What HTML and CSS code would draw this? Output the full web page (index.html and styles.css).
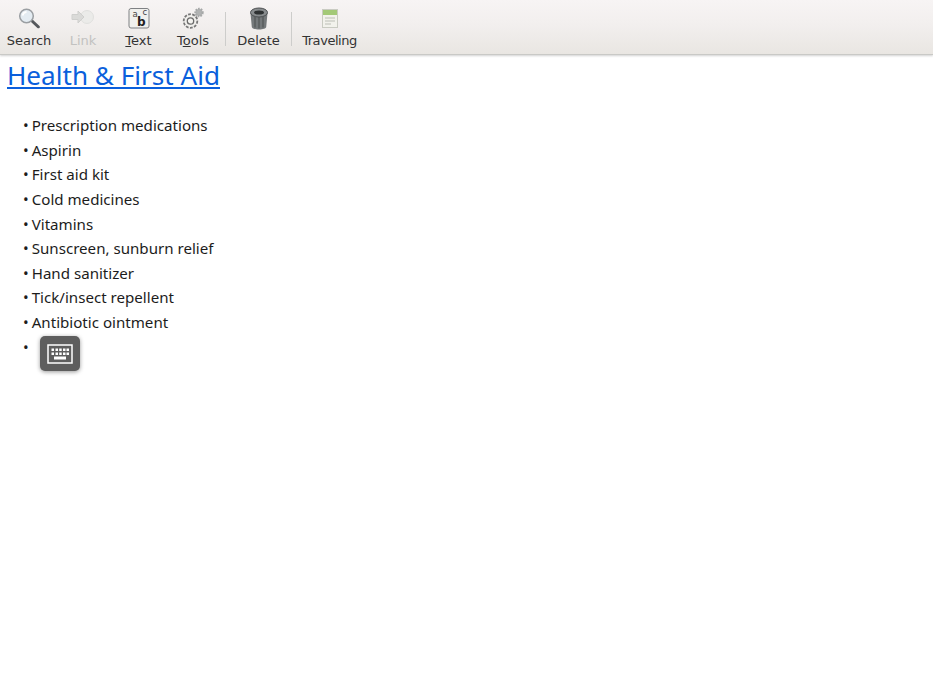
FILE: index.html
```html
<!DOCTYPE html>
<html lang="en">
<head>
<meta charset="utf-8">
<title>Health &amp; First Aid</title>
<link rel="stylesheet" href="styles.css">
</head>
<body>
<header class="toolbar">
  <div class="tool tool-search">
    <svg class="icon" viewBox="0 0 24 24"><path d="M13.500 14.500l2-2 7 6.500c.6.7.5 1.500-.1 2-.6.500-1.400.5-2-.1z" fill="#55585c"/><circle cx="9.500" cy="9" r="6.800" fill="#e4ecf2" stroke="#9a9ea2" stroke-width="1.500"/><path d="M5.500 8.500c.4-2 1.800-3.300 4-3.600" fill="none" stroke="#fff" stroke-width="1.800"/></svg>
    <span class="label">Search</span>
  </div>
  <div class="tool tool-link disabled">
    <svg class="icon" viewBox="0 0 24 24"><circle cx="16" cy="10" r="6.500" fill="#ebebe9" stroke="#e0e0de"/><path d="M1 7.500h6V4l6 6-6 6v-3.500H1z" fill="#dadad8" stroke="#cfcfcd"/></svg>
    <span class="label">Link</span>
  </div>
  <div class="tool tool-text">
    <svg class="icon" viewBox="0 0 24 24"><rect x="2" y="1.500" width="20" height="19.500" rx="2" fill="#f0f0ed" stroke="#7f8184"/><text x="5.500" y="9.500" class="glyph">a</text><text x="15.500" y="8" class="glyph">c</text><text x="10" y="18.500" class="glyph-b">b</text></svg>
    <span class="label"><u>T</u>ext</span>
  </div>
  <div class="tool tool-tools">
    <svg class="icon" viewBox="0 0 24 24"><circle cx="18" cy="5.500" r="3.600" fill="#b0b2b2" stroke="#a6a8a8" stroke-width="2.200" stroke-dasharray="1.600 1"/><circle cx="9.500" cy="14" r="6.800" fill="#f0efec" stroke="#777" stroke-width="1.800" stroke-dasharray="2.800 1.400"/><circle cx="9.500" cy="14" r="3.200" fill="#f4f3f0" stroke="#6a6a6a" stroke-width="1.300"/></svg>
    <span class="label">T<u>o</u>ols</span>
  </div>
  <div class="sep sep-first"></div>
  <div class="tool tool-delete">
    <svg class="icon" viewBox="0 0 24 24"><path d="M3.500 6h17l-1.300 14c-.2 1.500-3.200 2.500-7.200 2.500S5 21.500 4.800 20z" fill="#74787a"/><path d="M8 9.500v11M12 9.500v12M16 9.500v11" stroke="#585c5e" stroke-width="1.500"/><ellipse cx="12" cy="5.500" rx="8.500" ry="4.500" fill="#888c8e" stroke="#4d5052"/><ellipse cx="12" cy="5.500" rx="5" ry="2" fill="#2f3233"/></svg>
    <span class="label">Delete</span>
  </div>
  <div class="sep sep-second"></div>
  <div class="tool tool-note">
    <svg class="icon" viewBox="0 0 24 24"><rect x="4.500" y="2.500" width="15" height="18" fill="#f2f2ec" stroke="#c9cbc2"/><rect x="5" y="3" width="14" height="5" fill="#a3c977"/><path d="M7 11h10M7 14h10M7 17h6" stroke="#bcbeb6"/></svg>
    <span class="label">Traveling</span>
  </div>
</header>
<main class="content">
  <h1 class="title"><a href="#">Health &amp; First Aid</a></h1>
  <ul class="list">
    <li>Prescription medications</li>
    <li>Aspirin</li>
    <li>First aid kit</li>
    <li>Cold medicines</li>
    <li>Vitamins</li>
    <li>Sunscreen, sunburn relief</li>
    <li>Hand sanitizer</li>
    <li>Tick/insect repellent</li>
    <li>Antibiotic ointment</li>
    <li class="empty"></li>
  </ul>
</main>
<div class="kbd">
  <svg viewBox="0 0 26 20" width="26" height="20"><rect x="1" y="1" width="24" height="18" fill="none" stroke="#fff" stroke-width="1.500"/><path d="M4.500 4.500h2.500v2.500H4.500zM8.500 4.500H11v2.500H8.500zM12.200 4.500h2.500v2.500h-2.500zM16 4.500h2.500v2.500H16zM19.500 4.500H22v2.500h-2.500zM4.500 8.500H7v2.500H4.500zM8.500 8.500H11v2.500H8.500zM12.200 8.500h2.500v2.500h-2.500zM16 8.500h2.500v2.500H16zM19.500 8.500H22v2.500h-2.500zM7 12.500h12V15.500H7z" fill="#fff"/></svg>
</div>
</body>
</html>
```

FILE: styles.css
```css
html, body {
  margin: 0;
  padding: 0;
  background: #fff;
  height: 100%;
  overflow: hidden;
}

body {
  position: relative;
  font-family: "Noto Sans", "Open Sans", sans-serif;
  color: #1c1c1c;
}

.toolbar {
  display: flex;
  align-items: flex-start;
  height: 55px;
  box-sizing: border-box;
  background: linear-gradient(#f7f4f4, #f2efee 45%, #e9e6e2);
  border-bottom: 1px solid #c9c9c6;
  box-shadow: 0 1px 2px rgba(0, 0, 0, 0.18);
}

.tool {
  display: flex;
  flex-direction: column;
  align-items: center;
  flex: none;
}

.icon {
  display: block;
  width: 24px;
  height: 24px;
  margin-top: 7px;
}

.label {
  font-family: "DejaVu Sans", sans-serif;
  font-size: 13px;
  line-height: 16px;
  margin-top: 2px;
  color: #333;
  white-space: nowrap;
}

.disabled .label {
  color: #c2c2c0;
}

.glyph {
  font-family: "DejaVu Sans", sans-serif;
  font-size: 8.5px;
  fill: #444;
}

.glyph-b {
  font-family: "DejaVu Sans", sans-serif;
  font-size: 12px;
  font-weight: 700;
  fill: #222;
}

.tool-search { margin-left: 7px; width: 44px; }
.tool-link { margin-left: 20px; width: 24px; }
.tool-text { margin-left: 31px; width: 25px; }
.tool-tools { margin-left: 26px; width: 32px; }
.tool-delete { margin-left: 11px; width: 43px; }
.tool-note { margin-left: 10px; width: 55px; }
.tool-note .label { letter-spacing: -0.45px; }

.sep {
  width: 1px;
  height: 34px;
  margin-top: 12px;
  background: #cdcdcb;
  flex: none;
}

.sep-first { margin-left: 16px; }
.sep-second { margin-left: 11px; }

.content {
  padding: 0 7px;
}

.title {
  margin: 2px 0 0;
  font-size: 26.12px;
  font-weight: 400;
  line-height: 37px;
}

.title a {
  color: #0a5fdc;
}

.list {
  list-style: none;
  margin: 19.3px 0 0;
  padding: 0 0 0 16px;
  font-size: 15.12px;
  line-height: 24.6px;
}

.list li {
  height: 24.6px;
}

.list li::before {
  content: "•";
  margin-right: 3px;
}

.kbd {
  position: absolute;
  left: 40px;
  top: 336px;
  width: 40px;
  height: 35px;
  border-radius: 5px;
  background: #5e5e5e;
  box-shadow: 0 1px 4px rgba(0, 0, 0, 0.4);
  display: flex;
  align-items: center;
  justify-content: center;
}
```
